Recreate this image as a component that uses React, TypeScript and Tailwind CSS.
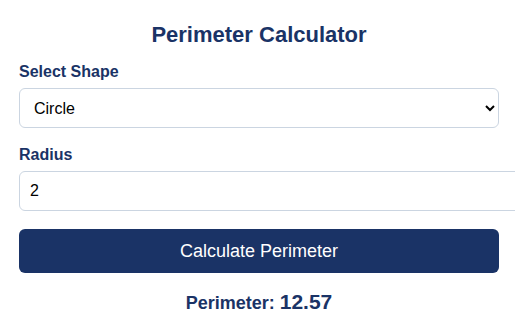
import React, { useState } from "react";

export default function App() {
  const [shape, setShape] = useState("circle");
  const [radius, setRadius] = useState("2");
  return (
    <div className="w-[515px] h-[325px] overflow-hidden bg-white" style={{ fontFamily: '"Liberation Sans", Arial, sans-serif' }}>
      <div className="w-[480px] ml-[19px] pt-[22px]">
        <h1 className="text-center text-[22px] font-bold leading-[26px] text-[#1a3366]">Perimeter Calculator</h1>
        <label className="block mt-[14px] text-[16px] font-bold leading-[19px] text-[#1a3366]">Select Shape</label>
        <select
          value={shape}
          onChange={(e) => setShape(e.target.value)}
          className="block mt-[7px] w-[480px] h-[40px] px-[10px] border border-[#cbd5e1] rounded-[6px] bg-white text-[16px] text-black"
          style={{ fontFamily: '"Liberation Sans", Arial, sans-serif' }}
        >
          <option value="circle">Circle</option>
          <option value="square">Square</option>
          <option value="rectangle">Rectangle</option>
        </select>
        <label className="block mt-[17px] text-[16px] font-bold leading-[19px] text-[#1a3366]">Radius</label>
        <input
          value={radius}
          onChange={(e) => setRadius(e.target.value)}
          className="block mt-[7px] w-[502px] h-[40px] px-[10px] border border-[#cbd5e1] rounded-[6px] bg-white text-[16px] text-black outline-none"
          style={{ fontFamily: '"Liberation Sans", Arial, sans-serif' }}
        />
        <button className="block mt-[18px] w-[480px] h-[44px] rounded-[6px] bg-[#1a3366] text-white text-[18px]">Calculate Perimeter</button>
        <p className="mt-[13px] text-center text-[18px] font-bold text-[#1a3366]">
          Perimeter: <span className="text-[21px]">12.57</span>
        </p>
      </div>
    </div>
  );
}
